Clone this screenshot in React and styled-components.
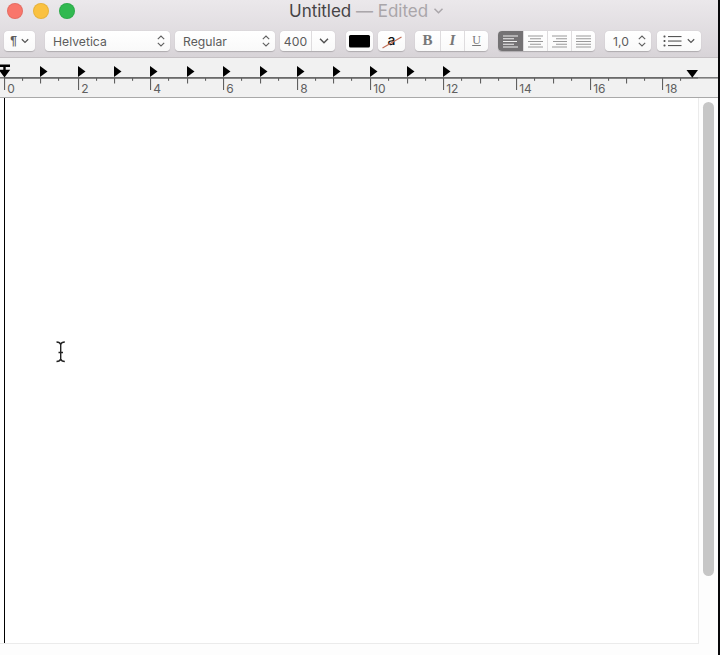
//Import styling
import styled, { createGlobalStyle } from "styled-components";

const tabStops = 13;
const ticks = [
  4, 40, 78, 114, 150, 187, 223, 260, 297, 333, 370, 407, 443, 480, 516, 553,
  590, 626, 662,
];

const Chevron = ({ color = "#555", width = 10 }) => (
  <svg width={width} height="6" viewBox="0 0 10 6" fill="none">
    <path d="M1 0.8 L5 4.8 L9 0.8" stroke={color} strokeWidth="1.5" />
  </svg>
);

const Stepper = () => (
  <svg width="8" height="12" viewBox="0 0 8 12" fill="none">
    <path
      d="M0.8 4.2 L4 1 L7.2 4.2 M0.8 7.8 L4 11 L7.2 7.8"
      stroke="#606060"
      strokeWidth="1.1"
    />
  </svg>
);

const alignments = {
  left: [[0, 15], [0, 11], [0, 14], [0, 11], [0, 15]],
  center: [[0, 15], [2, 11], [0, 15], [2, 11], [0, 15]],
  right: [[0, 15], [4, 11], [1, 14], [4, 11], [0, 15]],
  justify: [[0, 15], [0, 15], [0, 15], [0, 15], [0, 15]],
};

const AlignIcon = ({ type, color }) => (
  <svg width="15" height="13" viewBox="0 0 15 13">
    {alignments[type].map(([x, width], i) => (
      <rect key={i} x={x} y={i * 2.75 + 0.5} width={width} height="1" fill={color} />
    ))}
  </svg>
);

const ListIcon = () => (
  <svg width="19" height="12" viewBox="0 0 19 12" fill="#555">
    {[1, 5.5, 10].map((y) => (
      <g key={y}>
        <rect x="0.5" y={y - 0.5} width="2" height="2" rx="0.7" />
        <rect x="5" y={y} width="13.5" height="1.1" />
      </g>
    ))}
  </svg>
);

const Ruler = () => (
  <StyledRuler>
    <svg width="718" height="39" viewBox="0 0 718 39">
      <rect x="0" y="19" width="718" height="1.6" fill="#7c7c7c" />
      <rect x="4" y="19" width="694" height="1.6" fill="#6a6a6a" />
      {ticks.map((x, i) => (
        <g key={x}>
          <rect
            x={x}
            y="20"
            width="1.1"
            height={i % 2 ? 5.5 : 12}
            fill="#606060"
          />
          <rect x={x + 18} y="20" width="1.1" height="2.8" fill="#606060" />
          {i > 0 && i < tabStops && <path d={`M${x} 8 l7.5 5.5 l-7.5 5.5 z`} />}
          {i % 2 === 0 && (
            <text x={x + 3.2} y="35">
              {i}
            </text>
          )}
        </g>
      ))}
      <path d="M-1 6.5 H10 V9 H5.7 V11.8 H10.2 L4.5 19.5 L-1.2 11.8 H3.3 V9 H-1 z" />
      <path d="M686.5 12 H698 L692.3 19.7 z" />
    </svg>
  </StyledRuler>
);

const App = () => {
  return (
    <StyledWindow>
      <GlobalStyle />
      <StyledHeader>
        <StyledTitleBar>
          <StyledLights>
            <StyledLight color="#f9766b" />
            <StyledLight color="#fac140" />
            <StyledLight color="#31b950" />
          </StyledLights>
          <StyledTitle>
            Untitled <span>— Edited</span>
          </StyledTitle>
          <Chevron color="#aaa6aa" width={11} />
        </StyledTitleBar>
        <StyledToolbar>
          <StyledControl width={31} gap={10}>
            <StyledPilcrow>¶</StyledPilcrow>
            <Chevron width={8} />
          </StyledControl>
          <StyledSelect width={125} gap={5}>
            Helvetica
            <Stepper />
          </StyledSelect>
          <StyledSelect width={100} gap={5}>
            Regular
            <Stepper />
          </StyledSelect>
          <StyledControl width={55} gap={11}>
            <StyledSegment width={31}>400</StyledSegment>
            <StyledSegment width={24}>
              <Chevron width={10} />
            </StyledSegment>
          </StyledControl>
          <StyledControl width={27} gap={5}>
            <svg width="27" height="20">
              <rect x="3" y="4" width="21" height="12.5" rx="1.5" />
            </svg>
          </StyledControl>
          <StyledControl width={27} gap={10}>
            <StyledStruck>
              a
              <svg width="20" height="13" viewBox="0 0 20 13">
                <path d="M0.5 12 L19.5 1" stroke="#c0705a" strokeWidth="1.3" />
              </svg>
            </StyledStruck>
          </StyledControl>
          <StyledControl width={73} gap={10}>
            <StyledLetter width={25}>
              <b>B</b>
            </StyledLetter>
            <StyledLetter width={24}>
              <i>I</i>
            </StyledLetter>
            <StyledLetter width={24}>
              <u>U</u>
            </StyledLetter>
          </StyledControl>
          <StyledControl width={97} gap={10}>
            <StyledSegment width={25} $active>
              <AlignIcon type="left" color="#f0f0f0" />
            </StyledSegment>
            <StyledSegment width={24}>
              <AlignIcon type="center" color="#999" />
            </StyledSegment>
            <StyledSegment width={24}>
              <AlignIcon type="right" color="#999" />
            </StyledSegment>
            <StyledSegment width={24}>
              <AlignIcon type="justify" color="#999" />
            </StyledSegment>
          </StyledControl>
          <StyledSelect width={46} gap={6}>
            1,0
            <Stepper />
          </StyledSelect>
          <StyledControl width={44}>
            <StyledList>
              <ListIcon />
              <Chevron width={8} />
            </StyledList>
          </StyledControl>
        </StyledToolbar>
      </StyledHeader>
      <Ruler />
      <StyledContent>
        <StyledPage>
          <StyledCaret />
          <StyledPointer width="12" height="22" viewBox="0 0 12 22">
            <path
              d="M1.5 1 Q5 1 5.7 3.5 Q6.4 1 9.8 1 M5.7 3.5 V18 M1.5 20.5 Q5 20.5 5.7 18 Q6.4 20.5 9.8 20.5 M3.5 11.5 H8"
              fill="none"
              stroke="#222"
              strokeWidth="1.4"
            />
          </StyledPointer>
        </StyledPage>
        <StyledScrollbar>
          <StyledThumb />
        </StyledScrollbar>
      </StyledContent>
    </StyledWindow>
  );
};

export default App;

//Styled components
const GlobalStyle = createGlobalStyle`
  * {
    box-sizing: border-box;
  }
  body {
    margin: 0;
    overflow: hidden;
  }
`;

const StyledWindow = styled.div`
  display: flex;
  flex-direction: column;
  width: 720px;
  height: 655px;
  border-right: 2px solid #08080a;
  background: #fdfdfd;
  font-family: Inter, "Liberation Sans", sans-serif;
  color: #5c5c5c;
  svg {
    display: block;
    flex-shrink: 0;
  }
`;

const StyledHeader = styled.header`
  height: 58px;
  background: linear-gradient(#ebe8eb, #d8d4d8);
  border-bottom: 1px solid #c5c1c4;
`;

const StyledTitleBar = styled.div`
  display: flex;
  align-items: center;
  height: 21px;
  padding-left: 7px;
`;

const StyledLights = styled.div`
  display: flex;
  gap: 10px;
  width: 282px;
`;

const StyledLight = styled.span`
  width: 16px;
  height: 16px;
  border-radius: 50%;
  background: ${({ color }) => color};
  box-shadow: inset 0 0 0 1px rgba(0, 0, 0, 0.08);
`;

const StyledTitle = styled.h1`
  width: 144px;
  margin: 0;
  padding-top: 1px;
  font-size: 17px;
  font-weight: 400;
  letter-spacing: -0.02px;
  line-height: 21px;
  white-space: nowrap;
  color: #454345;
  span {
    color: #aaa6aa;
  }
`;

const StyledToolbar = styled.div`
  display: flex;
  gap: 5px;
  padding: 10px 0 0 4px;
`;

const StyledControl = styled.div`
  display: flex;
  flex-shrink: 0;
  align-items: center;
  justify-content: center;
  width: ${({ width }) => width}px;
  height: 20px;
  margin-right: ${({ gap }) => (gap ? gap - 5 + "px" : 0)};
  border-radius: 4px;
  overflow: hidden;
  background: linear-gradient(#ffffff, #f9f9f9);
  box-shadow: 0 0.5px 1px rgba(0, 0, 0, 0.2);
  font-size: 12.2px;
`;

const StyledSelect = styled(StyledControl)`
  justify-content: space-between;
  padding: 0 5px 0 8px;
`;

const StyledSegment = styled.div`
  display: flex;
  align-items: center;
  justify-content: center;
  width: ${({ width }) => width}px;
  height: 100%;
  background: ${({ $active }) => ($active ? "#747274" : "none")};
  & + & {
    border-left: 1px solid #dedcde;
  }
`;

const StyledLetter = styled(StyledSegment)`
  padding-bottom: 2px;
  font-family: "Liberation Serif", serif;
  font-size: 13px;
  font-weight: 700;
  color: #777;
  b {
    font-size: 15px;
  }
  i {
    font-size: 15px;
  }
  u {
    font-size: 12px;
    font-weight: 400;
  }
`;

const StyledPilcrow = styled.span`
  margin-right: 4px;
  font-family: "Liberation Sans", sans-serif;
  font-size: 12px;
  font-weight: 700;
`;

const StyledStruck = styled.span`
  position: relative;
  margin-top: -3px;
  font-size: 14px;
  font-weight: 500;
  line-height: 20px;
  color: #111;
  svg {
    position: absolute;
    top: 6px;
    left: -6px;
  }
`;

const StyledList = styled.div`
  display: flex;
  align-items: center;
  gap: 5px;
`;

const StyledRuler = styled.div`
  height: 40px;
  background: #f1f1f1;
  border-bottom: 1px solid #a9a9a9;
  font-size: 12px;
  svg text {
    fill: #606060;
  }
`;

const StyledContent = styled.main`
  display: flex;
  flex: 1;
`;

const StyledPage = styled.section`
  position: relative;
  width: 699px;
  height: 546px;
  padding-left: 4px;
  background: #fff;
  border: solid #ebebeb;
  border-width: 0 1px 1px 0;
`;

const StyledCaret = styled.div`
  width: 1px;
  height: 545px;
  background: #000;
`;

const StyledPointer = styled.svg`
  position: absolute;
  left: 55px;
  top: 243px;
`;

const StyledScrollbar = styled.aside`
  flex: 1;
  padding: 4px 0 0 4px;
`;

const StyledThumb = styled.div`
  width: 11px;
  height: 474px;
  border-radius: 6px;
  background: #c6c6c6;
`;
